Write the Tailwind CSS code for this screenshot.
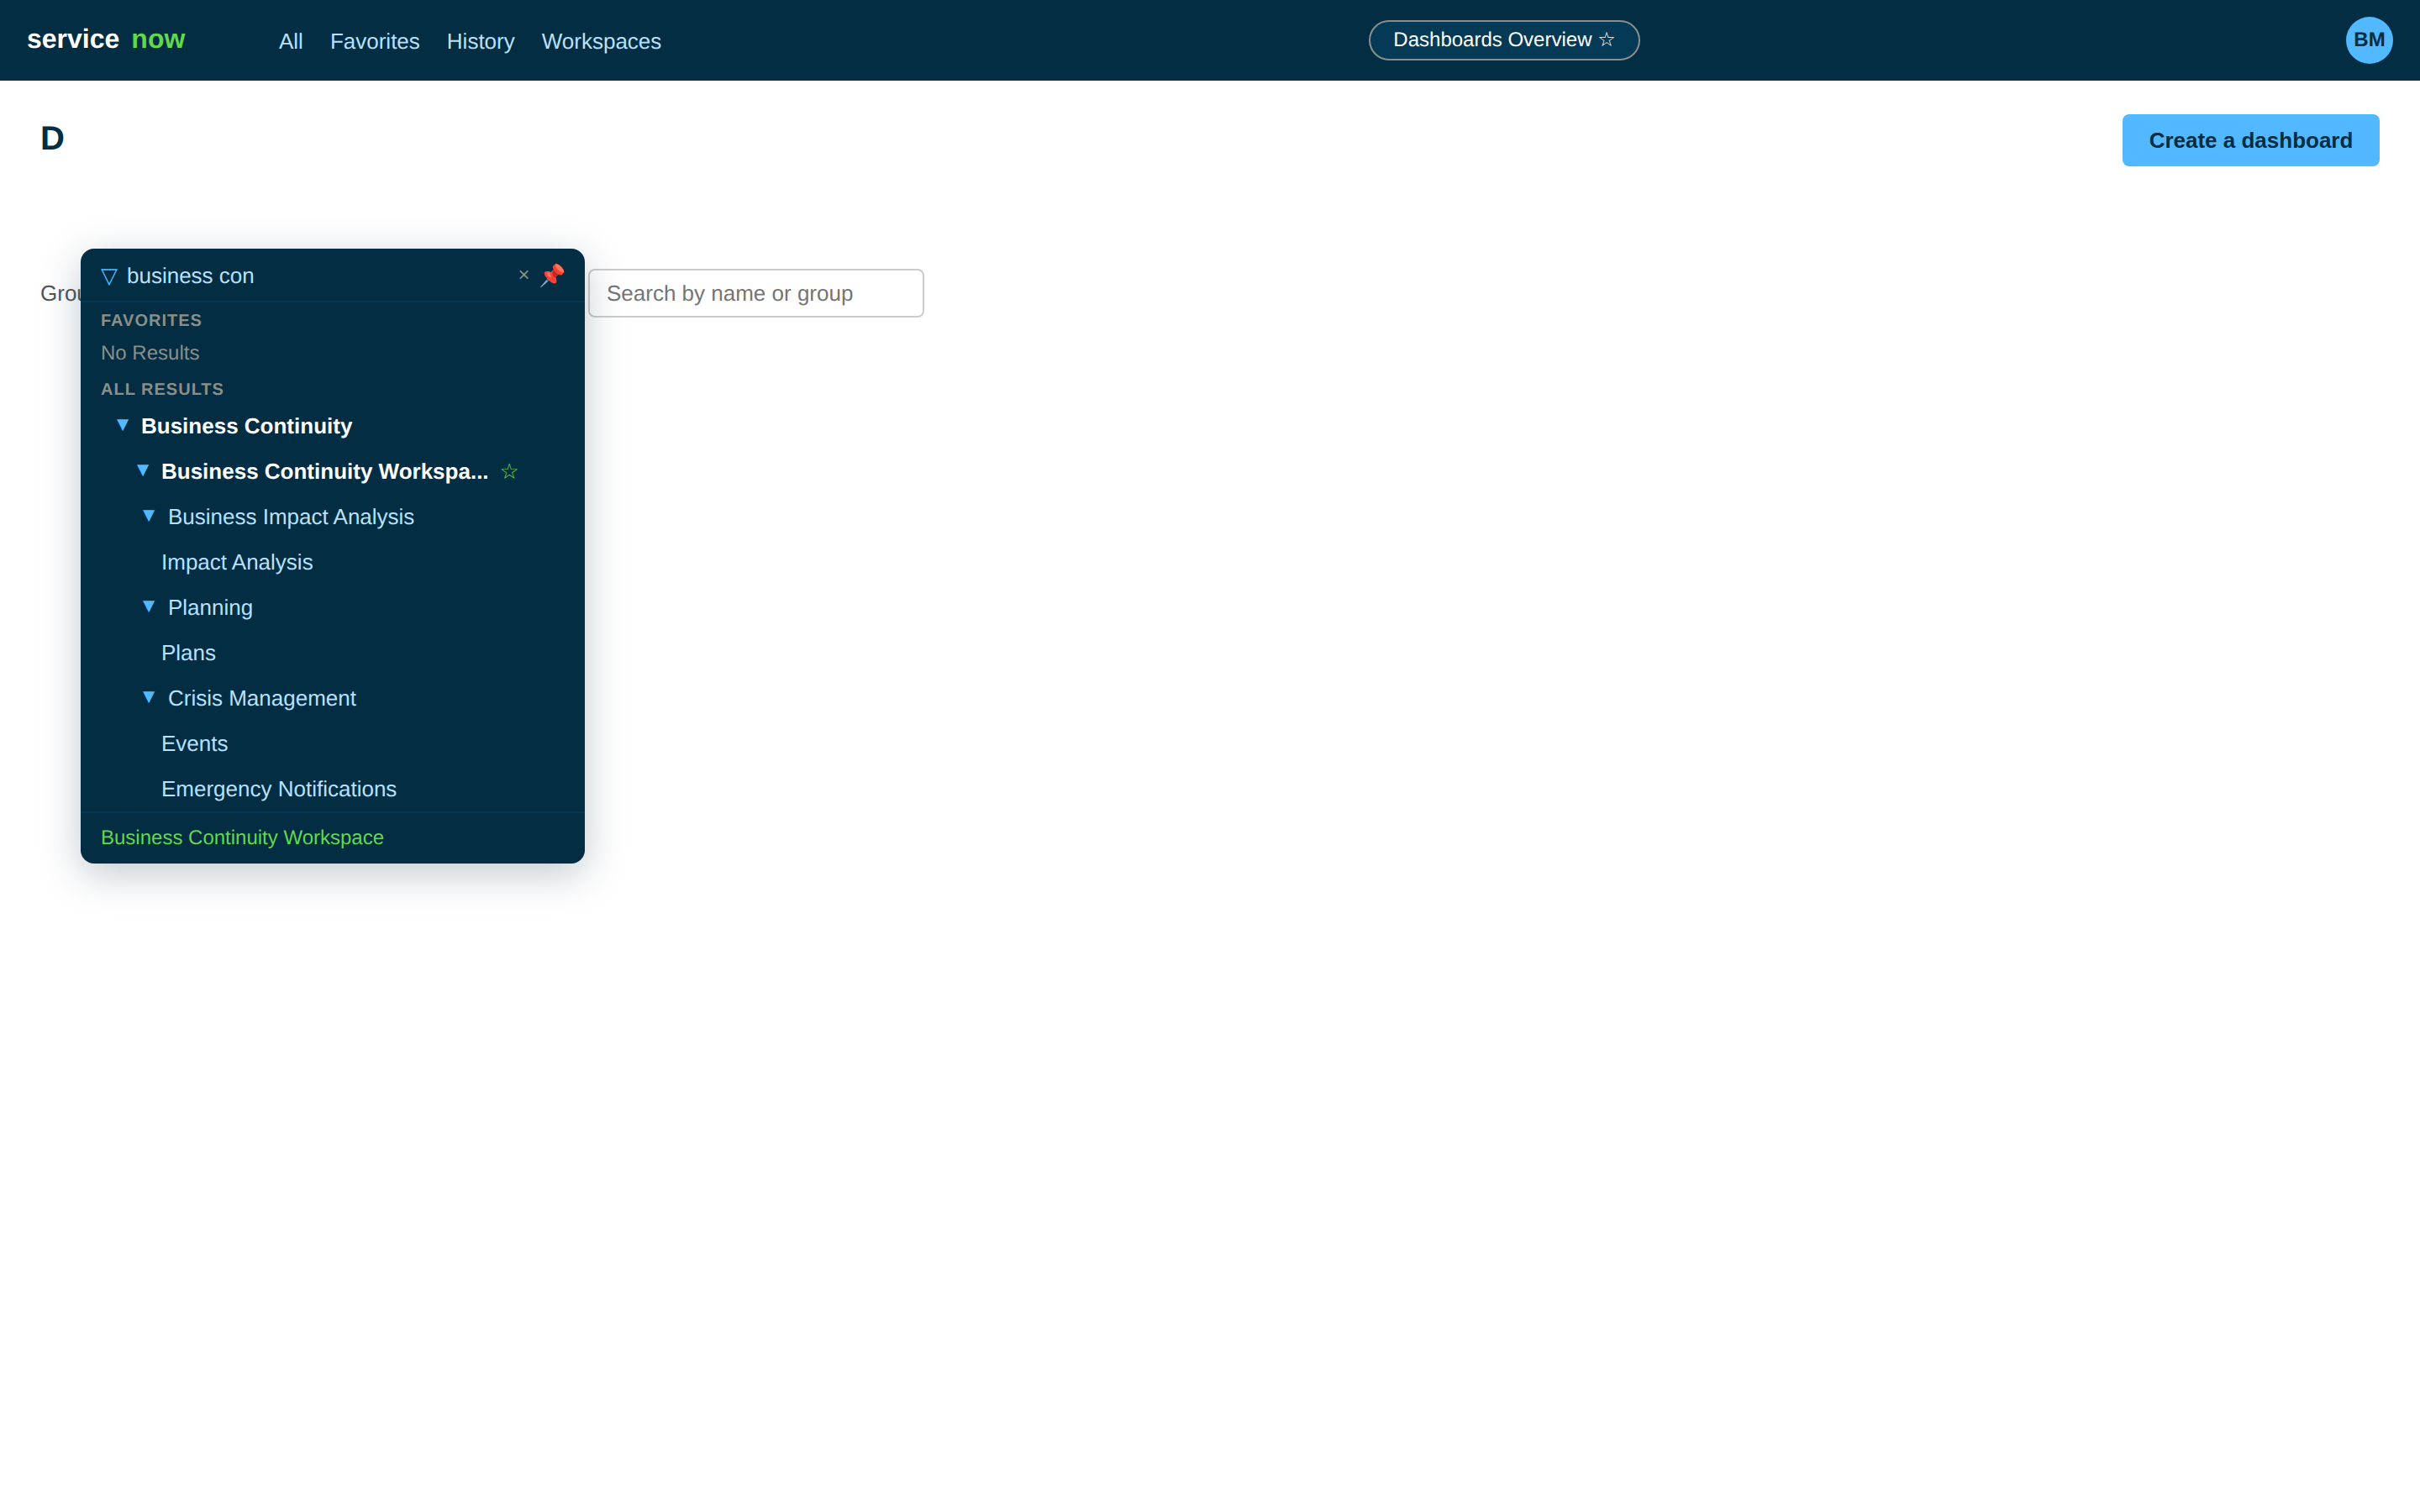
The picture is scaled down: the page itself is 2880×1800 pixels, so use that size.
<!DOCTYPE html>
<html lang="en">
<head>
<meta charset="utf-8">
<title>Dashboards Overview</title>
<script src="https://cdn.jsdelivr.net/npm/@tailwindcss/browser@4"></script>
</head>
<body class="relative min-h-screen bg-white font-['Liberation_Sans','DejaVu_Sans',sans-serif] text-[26px] text-[#032d42] [text-rendering:geometricPrecision]">
  <header class="relative flex h-[96px] items-center bg-[#032d42] pl-[32px] pr-[32px]">
    <div class="flex w-[300px] gap-[14px] text-[32px] font-bold leading-[36px] -mt-[5px]">
      <span class="text-white">service</span><span class="text-[#62d84e]">now</span>
    </div>
    <nav class="flex gap-[32px] text-[#b8e1ff] leading-[30px] mt-[2px]">
      <a>All</a><a>Favorites</a><a>History</a><a>Workspaces</a>
    </nav>
    <div class="absolute left-[1629px] top-[24px] flex h-[48px] w-[323px] items-center justify-center rounded-full border-2 border-[#8a8f8c] bg-[#043a56] text-[24px] text-white">Dashboards Overview ☆</div>
    <div class="ml-auto flex h-[56px] w-[56px] items-center justify-center rounded-full bg-[#52b8ff] text-[24px] font-bold">BM</div>
  </header>

  <main class="px-[48px]">
    <div class="flex items-start justify-between pt-[40px]">
      <h1 class="mt-[1px] text-[40px] font-bold leading-[56px]">D</h1>
      <button class="h-[62px] w-[306px] rounded-[8px] bg-[#52b8ff] font-bold text-[#032d42]">Create a dashboard</button>
    </div>
    <div class="mt-[122px] flex items-center">
      <span class="w-[652px] text-[#555555]">Group by</span>
      <div class="flex h-[58px] w-[400px] items-center rounded-[8px] border-2 border-[#cccccc] px-[20px] text-[#757575]">Search by name or group</div>
    </div>
  </main>

  <section class="absolute left-[96px] top-[296px] w-[600px] overflow-hidden rounded-[16px] bg-[#032d42] shadow-[0_12px_48px_rgba(3,45,66,0.25)]">
    <div class="flex h-[64px] items-center border-b-2 border-[#043a56] pl-[24px] pr-[22px] pt-[2px]">
      <span class="w-[31px] text-[#52b8ff]">▽</span>
      <span class="text-[#b8e1ff]">business con</span>
      <span class="ml-auto text-[24px] text-[#8a8f8c]">×</span>
      <span class="ml-[11px] text-[26px] leading-none">📌</span>
    </div>
    <div class="px-[24px] pt-[9px]">
      <div class="h-[26px] text-[20px] font-bold leading-[26px] tracking-[1px] text-[#8a8f8c]">FAVORITES</div>
      <div class="mt-[8px] h-[36px] text-[24px] leading-[36px] text-[#8a8f8c]">No Results</div>
      <div class="mt-[12px] h-[26px] text-[20px] font-bold leading-[26px] tracking-[1px] text-[#8a8f8c]">ALL RESULTS</div>
    </div>
    <ul class="mt-[3px]">
      <li class="flex h-[54px] items-center pl-[44px] font-bold text-white"><span class="mr-[16px] -mt-[2px] flex w-[12px] justify-center text-[24px] font-normal text-[#52b8ff]">▼</span>Business Continuity</li>
      <li class="flex h-[54px] items-center pl-[68px] font-bold text-white"><span class="mr-[16px] -mt-[2px] flex w-[12px] justify-center text-[24px] font-normal text-[#52b8ff]">▼</span>Business Continuity Workspa...<span class="ml-[13px] text-[#62d84e]">☆</span></li>
      <li class="flex h-[54px] items-center pl-[75px] text-[#b8e1ff]"><span class="mr-[17px] -mt-[2px] flex w-[12px] justify-center text-[24px] text-[#52b8ff]">▼</span>Business Impact Analysis</li>
      <li class="flex h-[54px] items-center pl-[96px] text-[#b8e1ff]">Impact Analysis</li>
      <li class="flex h-[54px] items-center pl-[75px] text-[#b8e1ff]"><span class="mr-[17px] -mt-[2px] flex w-[12px] justify-center text-[24px] text-[#52b8ff]">▼</span>Planning</li>
      <li class="flex h-[54px] items-center pl-[96px] text-[#b8e1ff]">Plans</li>
      <li class="flex h-[54px] items-center pl-[75px] text-[#b8e1ff]"><span class="mr-[17px] -mt-[2px] flex w-[12px] justify-center text-[24px] text-[#52b8ff]">▼</span>Crisis Management</li>
      <li class="flex h-[54px] items-center pl-[96px] text-[#b8e1ff]">Events</li>
      <li class="flex h-[54px] items-center pl-[96px] text-[#b8e1ff]">Emergency Notifications</li>
    </ul>
    <div class="flex h-[62px] items-center border-t-2 border-[#043a56] px-[24px] text-[24px] text-[#62d84e]">Business Continuity Workspace</div>
  </section>
</body>
</html>
